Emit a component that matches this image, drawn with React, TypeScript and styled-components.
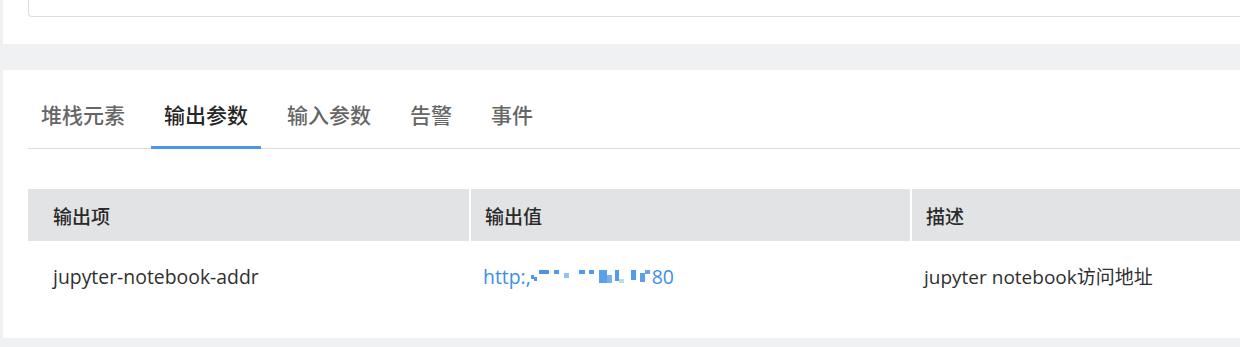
import React from "react";
import styled, { createGlobalStyle } from "styled-components";

const Global = createGlobalStyle`
  html, body { margin: 0; padding: 0; background: #f0f1f3; }
  body {
    font-family: "Noto Sans", "Noto Sans CJK SC", sans-serif;
    color: #333;
  }
`;

const Page = styled.div`
  width: 1240px;
  height: 347px;
  overflow: hidden;
  background: #f0f1f3;
  padding-left: 3px;
  box-sizing: border-box;
  display: flex;
  flex-direction: column;
`;

const TopPanel = styled.div`
  background: #fff;
  height: 44px;
  padding: 0 0 0 25px;
  box-sizing: border-box;
`;

const InputBox = styled.div`
  height: 18px;
  margin-top: -1px;
  border: 1px solid #dcdde0;
  border-right: none;
  border-radius: 0 0 0 4px;
  box-sizing: border-box;
`;

const Gap = styled.div`
  height: 26px;
  flex: none;
`;

const Panel = styled.div`
  background: #fff;
  height: 268px;
  padding: 0 0 0 25px;
  box-sizing: border-box;
`;

const Tabs = styled.div`
  display: flex;
  gap: 13px;
  border-bottom: 1px solid #dcdcdc;
  margin-top: 26px;
  height: 53px;
  box-sizing: border-box;
`;

const Tab = styled.div<{ $active?: boolean }>`
  padding: 0 13px;
  font-size: 21px;
  font-weight: 500;
  line-height: 36px;
  height: 53px;
  box-sizing: border-box;
  color: ${(p) => (p.$active ? "#262626" : "#666666")};
  border-bottom: 3px solid ${(p) => (p.$active ? "#4a96e8" : "transparent")};
  margin-bottom: -1px;
  font-family: "Noto Sans CJK SC", sans-serif;
`;

const Table = styled.div`
  margin-top: 40px;
  display: grid;
  grid-template-columns: 441px 441px 1fr;
`;

const HeadCell = styled.div`
  background: #e2e3e5;
  height: 52px;
  display: flex;
  align-items: center;
  padding-left: 14px;
  font-size: 19px;
  font-weight: 500;
  color: #2a2a2a;
  font-family: "Noto Sans CJK SC", sans-serif;
  border-left: 2px solid #fff;
  &:first-child { border-left: none; padding-left: 25px; }
`;

const Cell = styled.div`
  height: 70px;
  display: flex;
  align-items: center;
  padding-left: 14px;
  font-size: 19.4px;
  color: #303030;
  font-family: "Open Sans", "Noto Sans CJK SC", sans-serif;
  &:nth-child(3n + 1) { padding-left: 25px; }
`;

const Desc = styled.span`
  font-size: 19px;
`;

const LinkText = styled.a`
  color: #3b8fe6;
  text-decoration: none;
  display: inline-flex;
  align-items: center;
`;

const Mosaic = styled.svg`
  display: block;
  margin: 0 1px 0 0;
`;

const blocks: [number, number, number, number, number][] = [
  [0, 7, 3, 4, 0.9],
  [3, 9, 3, 4, 0.9],
  [8, 2, 10, 4, 0.95],
  [23, 2, 5, 4, 0.9],
  [33, 5, 5, 5, 0.55],
  [48, 2, 6, 4, 0.9],
  [58, 2, 5, 4, 0.9],
  [68, 2, 8, 13, 0.85],
  [76, 7, 5, 8, 0.7],
  [84, 2, 4, 11, 0.9],
  [88, 11, 5, 4, 0.35],
  [100, 2, 5, 10, 0.9],
  [109, 5, 5, 9, 0.85],
  [114, 2, 5, 4, 0.8],
];

export default function App() {
  return (
    <>
      <Global />
      <Page>
        <TopPanel>
          <InputBox />
        </TopPanel>
        <Gap />
        <Panel>
          <Tabs>
            <Tab>堆栈元素</Tab>
            <Tab $active>输出参数</Tab>
            <Tab>输入参数</Tab>
            <Tab>告警</Tab>
            <Tab>事件</Tab>
          </Tabs>
          <Table>
            <HeadCell>输出项</HeadCell>
            <HeadCell>输出值</HeadCell>
            <HeadCell>描述</HeadCell>
            <Cell>jupyter-notebook-addr</Cell>
            <Cell>
              <LinkText href="#">
                http:,
                <Mosaic width="120" height="16" viewBox="0 0 120 16">
                  {blocks.map(([x, y, w, h, o], i) => (
                    <rect key={i} x={x} y={y} width={w} height={h} fill="#3f8fe8" opacity={o} />
                  ))}
                </Mosaic>
                80
              </LinkText>
            </Cell>
            <Cell>
              <Desc>jupyter notebook访问地址</Desc>
            </Cell>
          </Table>
        </Panel>
      </Page>
    </>
  );
}
